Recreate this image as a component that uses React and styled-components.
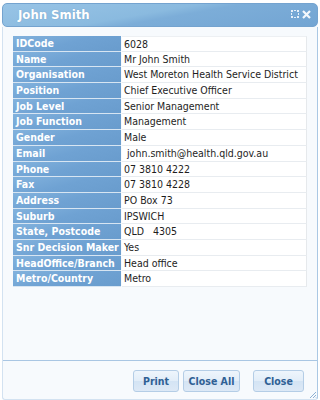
import React from 'react'
import styled, { createGlobalStyle } from 'styled-components'

const GlobalStyle = createGlobalStyle`
  html, body {
    margin: 0;
    padding: 0;
    background: #ffffff;
  }
  body {
    font-family: "DejaVu Sans Condensed", "DejaVu Sans", sans-serif;
  }
`

const StyledWindow = styled.div`
  display: flex;
  flex-direction: column;
  width: 316px;
  height: 397px;
  margin: 3px 0 0 2px;
  background: #f7fafd;
  border-radius: 5px 5px 3px 3px;
  box-sizing: border-box;
`
const StyledHeader = styled.div`
  display: flex;
  align-items: center;
  justify-content: space-between;
  height: 24px;
  padding: 0 6px 2px 15px;
  border-radius: 5px;
  background: linear-gradient(170deg, #98c4e6 0%, #8abadf 45%, #7cadd8 55%, #73a5d3 100%);
  border: 1px solid #74a3cf;
  box-sizing: border-box;
`
const StyledTitle = styled.span`
  color: #ffffff;
  font-weight: bold;
  font-size: 13px;
  text-shadow: 0 0 1px rgba(40, 80, 130, 0.3);
`
const StyledTools = styled.div`
  display: flex;
  align-items: center;
  gap: 3px;
`
const StyledBody = styled.div`
  flex: 1;
  display: flex;
  flex-direction: column;
  border-left: 1px solid #d3e2f1;
  border-right: 1px solid #aac8e4;
  border-bottom: 1px solid #d3e2f1;
  border-radius: 0 0 3px 3px;
`
const StyledContent = styled.div`
  flex: 1;
  padding: 9px 8px 0 10px;
  border-bottom: 1px solid #a9c6e3;
`
const StyledTable = styled.div`
  display: grid;
  grid-template-columns: 108px 1fr;
  column-gap: 1px;
  width: 294px;
`
const StyledLabel = styled.div`
  height: 15.7px;
  box-sizing: border-box;
  padding-left: 3px;
  line-height: 15px;
  color: #ffffff;
  font-weight: bold;
  font-size: 10.5px;
  white-space: nowrap;
  background: linear-gradient(165deg, #82b2dd 0%, #6fa2d3 50%, #699ccd 100%);
  border-bottom: 1px solid #d7e5f2;
`
const StyledValue = styled.div`
  height: 15.7px;
  box-sizing: border-box;
  padding-left: 2px;
  line-height: 15px;
  color: #1e1e1e;
  font-size: 10.5px;
  white-space: pre;
  background: #ffffff;
  border-bottom: 1px solid #e8ecf0;
  border-right: 1px solid #e6e9ec;
  border-top: ${(p) => (p.first ? '1px solid #edf0f3' : 'none')};
`
const StyledFooter = styled.div`
  display: flex;
  justify-content: flex-end;
  align-items: flex-start;
  position: relative;
  height: 38px;
  padding: 9px 13px 0 0;
  box-sizing: border-box;
`
const StyledButton = styled.button`
  width: ${(p) => p.w}px;
  height: 22px;
  margin-left: ${(p) => p.gap}px;
  padding: 0;
  border: 1px solid #b4cde6;
  border-radius: 3px;
  background: linear-gradient(#eef5fc 0%, #e2edf8 50%, #d4e4f4 52%, #dde9f6 100%);
  color: #2f6094;
  font-family: "DejaVu Sans Condensed", "DejaVu Sans", sans-serif;
  font-weight: bold;
  font-size: 10.5px;
  cursor: pointer;
`
const StyledGrip = styled.svg`
  position: absolute;
  right: 0;
  bottom: 0;
`

const rows = [
  ['IDCode', '6028'],
  ['Name', 'Mr John Smith'],
  ['Organisation', 'West Moreton Health Service District'],
  ['Position', 'Chief Executive Officer'],
  ['Job Level', 'Senior Management'],
  ['Job Function', 'Management'],
  ['Gender', 'Male'],
  ['Email', ' john.smith@health.qld.gov.au'],
  ['Phone', '07 3810 4222'],
  ['Fax', '07 3810 4228'],
  ['Address', 'PO Box 73'],
  ['Suburb', 'IPSWICH'],
  ['State, Postcode', 'QLD   4305'],
  ['Snr Decision Maker', 'Yes'],
  ['HeadOffice/Branch', 'Head office'],
  ['Metro/Country', 'Metro'],
]

function MaximizeIcon() {
  return (
    <svg width="8" height="8" viewBox="0 0 8 8">
      <g fill="#e6f0fa">
        <rect x="0" y="0" width="2" height="2" />
        <rect x="3" y="0" width="2" height="1" />
        <rect x="6" y="0" width="2" height="2" />
        <rect x="0" y="6" width="2" height="2" />
        <rect x="3" y="7" width="2" height="1" />
        <rect x="6" y="6" width="2" height="2" />
        <rect x="0" y="3" width="1" height="2" />
        <rect x="7" y="3" width="1" height="2" />
      </g>
    </svg>
  )
}

function CloseIcon() {
  return (
    <svg width="9" height="9" viewBox="0 0 9 9">
      <path d="M1 1 L8 8 M8 1 L1 8" stroke="#f4f8fc" strokeWidth="2.2" />
    </svg>
  )
}

export default function App() {
  return (
    <>
      <GlobalStyle />
      <StyledWindow>
        <StyledHeader>
          <StyledTitle>John Smith</StyledTitle>
          <StyledTools>
            <MaximizeIcon />
            <CloseIcon />
          </StyledTools>
        </StyledHeader>
        <StyledBody>
          <StyledContent>
            <StyledTable>
              {rows.map(([label, value], i) => (
                <React.Fragment key={label}>
                  <StyledLabel>{label}</StyledLabel>
                  <StyledValue first={i === 0}>{value}</StyledValue>
                </React.Fragment>
              ))}
            </StyledTable>
          </StyledContent>
          <StyledFooter>
            <StyledButton w={46} gap={0}>Print</StyledButton>
            <StyledButton w={57} gap={4}>Close All</StyledButton>
            <StyledButton w={51} gap={13}>Close</StyledButton>
            <StyledGrip width="8" height="8" viewBox="0 0 8 8">
              <path d="M7 1 L1 7 M7 4 L4 7 M7 6.5 L6.5 7" stroke="#8fb1d3" strokeWidth="1" />
            </StyledGrip>
          </StyledFooter>
        </StyledBody>
      </StyledWindow>
    </>
  )
}
